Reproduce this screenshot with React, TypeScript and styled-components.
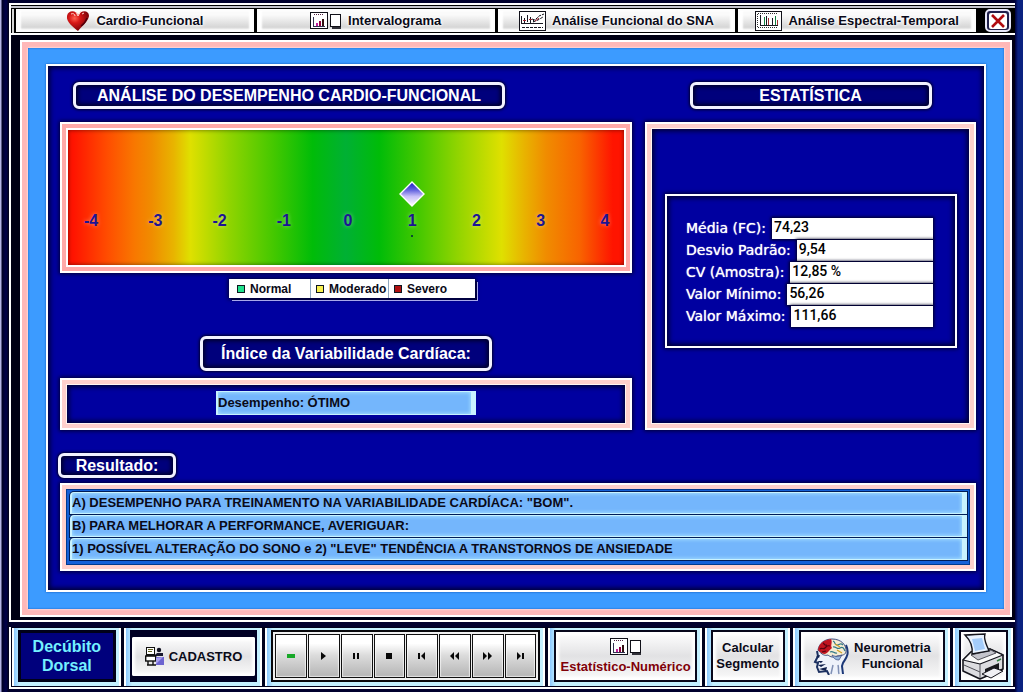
import React from "react";
import styled, { createGlobalStyle, css } from "styled-components";

const GlobalStyle = createGlobalStyle`
  *, *::before, *::after { box-sizing: border-box; }
  body {
    margin: 0;
    background: #00002e;
    font-family: "Liberation Sans", Arial, sans-serif;
    font-weight: 700;
    color: #0a0a18;
  }
  button, input, h1, h2, p { font: inherit; color: inherit; margin: 0; }
  button { cursor: pointer; }
`;

const Screen = styled.div`
  display: flex;
  flex-direction: column;
  gap: 5px;
  padding: 3px 8px 4px 9px;
  background: linear-gradient(90deg, #b4b4e6 1px, #000024 2px, #00004c 6px, #000018 9px, transparent 10px),
    linear-gradient(270deg, #0a2280 5px, #00003a 8px, transparent 9px), #00002e;
`;

/* ---- upper window: tab bar and report ---- */

const Window = styled.div`
  display: flex;
  flex-direction: column;
  border: 2px solid #fff;
  border-right: 0;
  background: #000014;
`;

const TabBar = styled.nav`
  display: flex;
  align-items: stretch;
  gap: 9px;
  height: 30px;
  padding: 4px 4px 1px 5px;
  border-bottom: 2px solid #fff;
  background: linear-gradient(#000 1px, #c4c4cc 1px, #c4c4cc 3px, #000 3px, #000 4px, transparent 4px),
    linear-gradient(90deg, #000 1px, #d8d8d8 1px, #d8d8d8 3px, #000 3px);
`;

const Tabs = styled.div`
  flex: 1;
  display: flex;
  gap: 3px;
`;

const Tab = styled.button`
  flex: 1 1 0;
  min-width: 0;
  display: flex;
  align-items: center;
  justify-content: center;
  gap: 6px;
  padding: 0;
  border: 2px solid #fdfdfd;
  background: linear-gradient(#fafafa 20%, #d6d6d6 85%, #f4f4f4);
  box-shadow: inset 3px 0 2px #fff, inset -3px 0 2px #fff;
  font-size: 13px;
  line-height: 16px;
  white-space: nowrap;
`;

const Halo = styled.span`
  text-shadow: 0 0 2px #fff, 0 0 3px #fff, 0 0 4px #fff;
`;

const CloseButton = styled.button`
  width: 26px;
  padding: 0;
  display: grid;
  place-items: center;
  border: 2px solid #e8e8fa;
  border-radius: 5px;
  background: #20204c;
`;

const Report = styled.main`
  margin: 5px 3px 3px 9px;
  border: 2px solid #fff;
  padding: 6px;
  background: #ffb8b8;
`;

const BlueFrame = styled.div`
  padding: 16px 18px 17px 18px;
  background: #3c9bff;
  box-shadow: inset 0 0 2px #1458b8, 0 0 2px #fff;
`;

const Sheet = styled.div`
  display: grid;
  grid-template-columns: 572fr 331fr;
  column-gap: 13px;
  padding: 16px 8px 19px 12px;
  border: 2px solid #fff;
  background: #0000a0;
  box-shadow: inset 0 0 5px 2px #000030, 0 0 2px #0a50b0;
`;

const Column = styled.section`
  display: flex;
  flex-direction: column;
  min-width: 0;
`;

const capsule = css`
  border: 3px solid #f2f2ff;
  border-radius: 6px;
  background: #00007c;
  box-shadow: inset 0 0 4px 2px #000028, 0 0 3px 1px #000028;
  color: #fff;
  font-size: 16px;
  text-align: center;
  white-space: nowrap;
`;

const Title = styled.h1<{ $width: number; $align?: string }>`
  ${capsule}
  align-self: ${(p) => p.$align ?? "center"};
  width: ${(p) => p.$width}px;
  max-width: 100%;
  line-height: 21px;
`;

const MainTitle = styled(Title)`
  margin-left: 13px;
`;

const IndexLabel = styled.label`
  ${capsule}
  align-self: center;
  width: 292px;
  margin-top: 38px;
  line-height: 29px;
`;

const Panel = styled.div<{ $tone?: string }>`
  border: 2px solid #fff;
  padding: 4px;
  background: ${(p) => p.$tone ?? "#ffd0cc"};
  box-shadow: 0 0 4px 1px #000030;
`;

const GaugePanel = styled(Panel)`
  margin-top: 13px;
`;

const Gauge = styled.div`
  display: flex;
  justify-content: space-between;
  align-items: flex-end;
  height: 139px;
  padding: 0 7px 22px 11px;
  border: 2px solid #fff;
  background: linear-gradient(
    90deg,
    #ff1400 1%, #ff4c00 7%, #f87800 12%, #f08c00 15%, #e8b400 19%, #dfe000 22%,
    #90d400 29%, #44c800 37%, #00bc08 44%, #00b034 50%, #00bc08 56%, #44c800 63%,
    #90d400 70%, #dfe000 78%, #e8b400 82%, #f08c00 86%, #f86400 92%, #ff1400 98%
  );
  box-shadow: inset 0 0 4px #00000088;
`;

const Mark = styled.div`
  width: 24px;
  height: 62px;
  display: flex;
  flex-direction: column;
  align-items: center;
  color: #1c1494;
  font-size: 16px;
  line-height: 18px;
  text-shadow: 0 0 4px #ffffff70;
`;

const Pointer = styled.div`
  height: 31px;
`;

const Dot = styled.i`
  width: 2px;
  height: 2px;
  margin-top: 5px;
  background: #0c4c30;
`;

const Legend = styled.ul`
  align-self: center;
  display: flex;
  width: 246px;
  height: 19px;
  margin: 6px 0 0 12px;
  padding: 0 8px;
  list-style: none;
  background: #fff;
  box-shadow: 2px 2px 0 #000040, 3px 3px 0 #a8a8ec, 0 0 4px 1px #000030;
  font-size: 12px;
  line-height: 18px;
`;

const LegendItem = styled.li`
  display: flex;
  align-items: center;
  gap: 5px;
  & + & { border-left: 1px solid #90a8c0; padding-left: 5px; }
  &:first-child { flex: 0 0 73px; }
  &:nth-child(2) { flex: 0 0 78px; }
`;

const Swatch = styled.i<{ $color: string }>`
  width: 8px;
  height: 8px;
  border: 1px solid #101820;
  background: ${(p) => p.$color};
`;

const field = css`
  display: block;
  border: 1px solid #c8f2ff;
  border-width: 1px 5px 1px 2px;
  background: #74b6fc;
  box-shadow: inset 0 0 4px #b4ecff;
  padding: 0 0 2px;
  font-size: 13px;
  outline: 0;
`;

const IndexPanel = styled(Panel)`
  margin-top: 7px;
`;

const Well = styled.div<{ $pad: string }>`
  border: 1px solid #fff4f2;
  background: #0000a0;
  box-shadow: inset 0 0 5px 2px #000030;
  padding: ${(p) => p.$pad};
`;

const IndexField = styled.input`
  ${field}
  width: 260px;
  height: 24px;
  margin: 0 auto;
`;

const StatsPanel = styled(Panel)`
  flex: 1;
  display: flex;
  margin-top: 13px;
`;

const StatsWell = styled(Well)`
  flex: 1;
  min-width: 0;
  display: flex;
  flex-direction: column;
  justify-content: center;
`;

const StatsBox = styled.div`
  display: flex;
  flex-direction: column;
  gap: 1px;
  margin-bottom: 10px;
  padding: 22px 22px 19px 19px;
  border: 2px solid #fff;
  box-shadow: inset 0 0 5px 2px #000030, 0 0 4px 1px #000030;
`;

const StatRow = styled.div`
  display: flex;
  align-items: center;
  gap: 6px;
  color: #fff;
  font: 400 14px/21px "DejaVu Sans", Verdana, sans-serif;
  text-shadow: 0 0 1px #fff;
`;

const StatInput = styled.input`
  flex: 1;
  min-width: 0;
  height: 21px;
  padding: 0 0 3px 2px;
  border: 0;
  background: #fff;
  box-shadow: 0 0 3px 1px #000020;
  color: #000;
  font: 500 14px/18px Roboto, "Liberation Sans", sans-serif;
`;

const Results = styled.section`
  grid-column: 1 / -1;
  display: flex;
  flex-direction: column;
  padding-top: 23px;
`;

const ResultTitle = styled(Title)`
  margin-left: -2px;
  line-height: 19px;
`;

const ResultPanel = styled(Panel)`
  margin-top: 5px;
`;

const ResultList = styled.div`
  display: flex;
  flex-direction: column;
  gap: 1px;
  padding: 2px 2px 4px 3px;
  border: 1px solid #003a90;
  background: #1460d8;
`;

const ResultLine = styled.input`
  ${field}
  width: 100%;
  height: 22px;
  border-radius: 4px 0 0 0;
  box-shadow: inset 0 0 4px #b4ecff, 0 0 0 1px #001c58;
`;

/* ---- lower command bar ---- */

const CommandBar = styled.footer`
  display: flex;
  gap: 3px;
  height: 62px;
  padding: 1px 2px 1px 1px;
  border-left: 2px solid #fff;
  border-bottom: 2px solid #fff;
  background: #00001c;
`;

const Cell = styled.div<{ $basis: number }>`
  flex: 1 1 ${(p) => p.$basis}px;
  min-width: 0;
  display: flex;
  padding: 2px 3px 4px 4px;
  border: 1px solid #fff;
  border-width: 0 2px;
  background: linear-gradient(90deg, #8cc8ff, #c4f0ff 6px, #c4f0ff);
`;

const Status = styled.p`
  flex: 1;
  display: flex;
  align-items: center;
  justify-content: center;
  border: 3px solid #000018;
  background: #00007c;
  color: #74f0ff;
  font-size: 16px;
  line-height: 19px;
  text-align: center;
`;

const DarkSlot = styled.div`
  flex: 1;
  display: flex;
  padding: 7px 2px 6px;
  background: #000024;
`;

const Command = styled.button<{ $stack?: boolean; $color?: string }>`
  flex: 1;
  min-width: 0;
  display: flex;
  flex-direction: ${(p) => (p.$stack ? "column" : "row")};
  align-items: center;
  justify-content: center;
  gap: ${(p) => (p.$stack ? 3 : 5)}px;
  padding: 0;
  border: 2px solid #08081c;
  background: linear-gradient(#fff, #e2e2e4 50%, #fafafa);
  box-shadow: inset 0 0 3px 3px #fff;
  color: ${(p) => p.$color ?? "#0a0a18"};
  font-size: 13px;
  line-height: 16px;
  white-space: nowrap;
`;

const RaisedCommand = styled(Command)`
  border: 0;
  border-radius: 2px;
`;

const Transport = styled.div`
  flex: 1;
  display: grid;
  grid-template-columns: repeat(8, 1fr);
  gap: 1px;
  padding: 2px;
  border: 2px solid #08080c;
  background: #f0f0f0;
`;

const TransportButton = styled.button`
  display: grid;
  place-items: center;
  padding: 0;
  min-width: 0;
  border: 1px solid #101010;
  background: linear-gradient(#fff 20%, #dcdcdc 48%, #b4b4b4);
  box-shadow: inset 0 0 1px 1px #ffffffa0;
`;

/* ---- drawings ---- */

const Heart = () => (
  <svg width="24" height="22" viewBox="0 0 24 22" aria-hidden="true">
    <defs>
      <radialGradient id="heart" cx="0.35" cy="0.35" r="0.7">
        <stop offset="0" stopColor="#ff6050" />
        <stop offset="0.35" stopColor="#d81818" />
        <stop offset="1" stopColor="#700008" />
      </radialGradient>
    </defs>
    <path d="M12 5C10 0 2 0 1 6c-1 6 6 11 11 15 3-4 10-9 11-15 0-6-8-6-11-1z" fill="url(#heart)" />
    <path d="M10 2l2 4 3-5M5 4c2-1 4 0 4 2M16 4l2-1" fill="none" stroke="#ffd8d0" strokeWidth="1" />
    <path d="M15 16c3-2 5-5 6-8" fill="none" stroke="#50000c" strokeWidth="1.4" />
  </svg>
);

const ChartAndSheet = () => (
  <svg width="32" height="18" viewBox="0 0 32 18" shapeRendering="crispEdges" aria-hidden="true">
    <rect x="0.5" y="0.5" width="17" height="16" fill="#fff" stroke="#101018" />
    <path d="M4 2.5h10" stroke="#502040" strokeDasharray="1 1" />
    <path d="M3.5 5v9M3 14.5h12" stroke="#303050" />
    <path d="M6 11h2v3H6z" fill="#c020a0" />
    <path d="M9 9h2v5H9z" fill="#900040" />
    <path d="M12 7h2v7h-2z" fill="#301010" />
    <path d="M22 15h9v2h-9z" fill="#303038" />
    <rect x="20.5" y="2.5" width="10" height="12" fill="#fff" stroke="#101018" />
  </svg>
);

const TrendIcon = () => (
  <svg width="27" height="20" viewBox="0 0 27 20" aria-hidden="true">
    <rect x="0.5" y="0.5" width="26" height="19" fill="#fff" stroke="#101018" />
    <g fill="none" stroke="#181820" strokeWidth="1">
      <path d="M2.5 12V5M5.5 12V7M8.5 11V4M11.5 12V6M14.5 11V8M2 12.5h22" />
      <path d="M13 8l3 1 4-4 5-2M14 11l5-2 5-3M3 16.5h21" strokeDasharray="3 1" />
    </g>
    <path d="M4 9.5h3M10 8.5h3M16 10l4-3" stroke="#a02030" fill="none" />
  </svg>
);

const SpectrumIcon = () => (
  <svg width="27" height="20" viewBox="0 0 27 20" shapeRendering="crispEdges" aria-hidden="true">
    <rect x="0.5" y="0.5" width="26" height="19" fill="#fff" stroke="#101018" />
    <path d="M3 2.5h19M2.5 3v13M3 16.5h20" stroke="#303030" strokeDasharray="1 1" />
    <path d="M5.5 14V4M5 14.5h18M11.5 14V5M17.5 14V7" stroke="#181820" />
    <path d="M9.5 14V6M20.5 14V5" stroke="#108040" />
    <path d="M13.5 14V7M22.5 14V9" stroke="#a03030" />
  </svg>
);

const Cross = () => (
  <svg width="18" height="16" viewBox="0 0 18 16" aria-hidden="true">
    <rect width="18" height="16" rx="2" fill="#fff" />
    <path d="M3 2l12 12M15 2L3 14" stroke="#b00c10" strokeWidth="2.6" />
  </svg>
);

const Diamond = () => (
  <svg width="26" height="26" viewBox="0 0 26 26" aria-hidden="true">
    <defs>
      <linearGradient id="diamond" x1="0" y1="0" x2="0" y2="1">
        <stop offset="0" stopColor="#1818c0" />
        <stop offset="0.35" stopColor="#6868e0" />
        <stop offset="0.6" stopColor="#c8c0f8" />
        <stop offset="1" stopColor="#fff" />
      </linearGradient>
    </defs>
    <path d="M13 1l12 12-12 12L1 13z" fill="url(#diamond)" stroke="#fff" strokeWidth="1.4" />
  </svg>
);

const DeskIcon = () => (
  <svg width="19" height="19" viewBox="0 0 19 19" aria-hidden="true">
    <rect x="1.5" y="0.5" width="8" height="7" fill="#fff" stroke="#101010" />
    <path d="M3 2.5h5M3 4.5h4" stroke="#606020" />
    <circle cx="14" cy="3" r="2.2" fill="#101020" />
    <path d="M10 8l2-2h6v3h-8z" fill="#181830" />
    <rect x="0.7" y="9" width="10" height="5" fill="#fff" stroke="#101010" strokeWidth="1.4" />
    <path d="M1 8.500h10M3 14v4M8 14v4M2 18h9" stroke="#101010" strokeWidth="1.4" />
    <rect x="11" y="10" width="8" height="8" fill="#6c64d0" />
    <path d="M11 11l7-1-7 7z" fill="#a8a0f0" />
  </svg>
);

const BrainHead = () => (
  <svg width="36" height="38" viewBox="0 0 36 38" aria-hidden="true">
    <path d="M5 12C7 4 14 1 21 1c9 0 14 7 14 14 0 7-5 9-6 14l1 8H15l-2-5-7 1-2-6 1-2-4-2 3-6z" fill="#eef2fa" />
    <path d="M33 8c4 9 0 13-3 18l-1 3 1 8" fill="none" stroke="#1c3878" strokeWidth="2" />
    <path d="M4 14l1 5-3 6 3 1-1 4 2 5 8-1 2 4" fill="none" stroke="#1c3060" strokeWidth="2" />
    <path d="M4 24l6 0-2 2zM5 28l8-1-5 3zM3 19l4-1-1 3zM6 32l8-2-1 4z" fill="#10204c" />
    <path d="M25 28c1 4 0 6 1 9M20 28l-2 9" stroke="#8090b4" strokeWidth="1.5" fill="none" />
    <path d="M5 13C6 6 12 2 19 2c9 0 15 6 14 13-1 4-6 3-9 4-3 2-7 1-9-1-3 1-6 0-10-5z" fill="#f4ecd4" stroke="#405080" />
    <path d="M5 13C6 6 11 3 18 2c2 4-1 6 1 9-3 2-4 5-7 6-3 0-5-2-7-4z" fill="#c01420" />
    <path d="M7 12c2-2 3 1 5-1s2-3 5-2M10 6c2 1 1 3 4 2M9 15l4-1" fill="none" stroke="#580410" strokeWidth="1.2" />
    <path d="M20 4c3 1 1 4 4 4s3-3 6 0M20 10c3-1 4 3 7 1s4 1 5 3M17 15c3-2 4 2 7 1" fill="none" stroke="#307888" strokeWidth="1.2" />
    <path d="M22 7l5 3M24 13l5 3" stroke="#d0a020" strokeWidth="1.2" />
    <path d="M19 18c4 2 7 2 10 0l-3 5c-3 0-5-1-7-5z" fill="#98b8dc" stroke="#384880" strokeWidth="0.7" />
  </svg>
);

const Printer = () => (
  <svg width="43" height="47" viewBox="0 0 43 47" aria-hidden="true">
    <path d="M1 27l8-8 19-3 13 6v14L18 46 1 38z" fill="#dcdce0" stroke="#14141c" strokeWidth="1.6" strokeLinejoin="round" />
    <path d="M1 27l8-8 19-3 13 6-23 9z" fill="#fafafa" stroke="#14141c" strokeWidth="1.2" strokeLinejoin="round" />
    <path d="M9 22l20-5 5 3-18 7z" fill="#c4c4cc" stroke="#303038" strokeWidth="0.8" />
    <path d="M3 2c7 0 13-1 20-1-2 6 2 11 4 17l-17 3C11 14 8 7 3 2z" fill="#e8f2ff" stroke="#14141c" strokeWidth="1.4" />
    <path d="M10 6l10-1 3 11-10 2z" fill="#a4ccfa" />
    <path d="M18 31v14M2 32l16 7" stroke="#505058" fill="none" />
    <path d="M23 36l14-6v6l-14 6z" fill="#18181c" />
    <path d="M20 41l12-6 9 3-12 7z" fill="#f0f0f4" stroke="#14141c" />
    <path d="M35 28l4-2" stroke="#308040" strokeWidth="1.5" />
  </svg>
);

const transportShapes: [string, string][] = [
  ["Ativo", "M0 4h8v4H0z"],
  ["Reproduzir", "M2 2l5 4-5 4z"],
  ["Pausar", "M1 3h2v6H1zM5 3h2v6H5z"],
  ["Parar", "M1 3h6v6H1z"],
  ["Início", "M0 3h2v6H0zM7 2v8L3 6z"],
  ["Retroceder", "M4 2v8L0 6zM9 2v8L5 6z"],
  ["Avançar", "M0 2v8l4-4zM5 2v8l4-4z"],
  ["Fim", "M1 2v8l4-4zM6 3h2v6H6z"],
];

const stats: [string, string, string][] = [
  ["media", "Média (FC):", "74,23"],
  ["desvio", "Desvio Padrão:", "9,54"],
  ["cv", "CV (Amostra):", "12,85 %"],
  ["minimo", "Valor Mínimo:", "56,26"],
  ["maximo", "Valor Máximo:", "111,66"],
];

const results = [
  'A) DESEMPENHO PARA TREINAMENTO NA VARIABILIDADE CARDÍACA: "BOM".',
  "B) PARA MELHORAR A PERFORMANCE, AVERIGUAR:",
  '1) POSSÍVEL ALTERAÇÃO DO SONO e 2) "LEVE" TENDÊNCIA A TRANSTORNOS DE ANSIEDADE',
];

const marks = [-4, -3, -2, -1, 0, 1, 2, 3, 4];
const currentMark = 1;

export default function App() {
  return (
    <>
      <GlobalStyle />
      <Screen>
        <Window>
          <TabBar>
            <Tabs>
              <Tab><Heart /><Halo>Cardio-Funcional</Halo></Tab>
              <Tab><ChartAndSheet /><Halo>Intervalograma</Halo></Tab>
              <Tab><TrendIcon /><Halo>Análise Funcional do SNA</Halo></Tab>
              <Tab><SpectrumIcon /><Halo>Análise Espectral-Temporal</Halo></Tab>
            </Tabs>
            <CloseButton aria-label="Fechar"><Cross /></CloseButton>
          </TabBar>

          <Report>
            <BlueFrame>
              <Sheet>
                <Column>
                  <MainTitle $width={432} $align="flex-start">ANÁLISE DO DESEMPENHO CARDIO-FUNCIONAL</MainTitle>
                  <GaugePanel $tone="#ffaaa8">
                    <Gauge>
                      {marks.map((value) => (
                        <Mark key={value}>
                          <Pointer>{value === currentMark && <Diamond />}</Pointer>
                          <span>{value}</span>
                          {value === currentMark && <Dot />}
                        </Mark>
                      ))}
                    </Gauge>
                  </GaugePanel>
                  <Legend>
                    <LegendItem><Swatch $color="#20e08c" />Normal</LegendItem>
                    <LegendItem><Swatch $color="#f8f050" />Moderado</LegendItem>
                    <LegendItem><Swatch $color="#b01010" />Severo</LegendItem>
                  </Legend>
                  <IndexLabel htmlFor="indice">Índice da Variabilidade Cardíaca:</IndexLabel>
                  <IndexPanel>
                    <Well $pad="6px 0 8px">
                      <IndexField id="indice" readOnly value="Desempenho: ÓTIMO" />
                    </Well>
                  </IndexPanel>
                </Column>

                <Column>
                  <Title as="h2" $width={242}>ESTATÍSTICA</Title>
                  <StatsPanel>
                    <StatsWell $pad="0 12px 0 13px">
                      <StatsBox>
                        {stats.map(([id, label, value]) => (
                          <StatRow key={id}>
                            <label htmlFor={id}>{label}</label>
                            <StatInput id={id} readOnly value={value} />
                          </StatRow>
                        ))}
                      </StatsBox>
                    </StatsWell>
                  </StatsPanel>
                </Column>

                <Results>
                  <ResultTitle as="h2" id="resultado" $width={118} $align="flex-start">Resultado:</ResultTitle>
                  <ResultPanel>
                    <ResultList>
                      {results.map((line) => (
                        <ResultLine key={line} aria-labelledby="resultado" readOnly value={line} />
                      ))}
                    </ResultList>
                  </ResultPanel>
                </Results>
              </Sheet>
            </BlueFrame>
          </Report>
        </Window>

        <CommandBar>
          <Cell $basis={109}>
            <Status>Decúbito<br />Dorsal</Status>
          </Cell>
          <Cell $basis={139}>
            <DarkSlot>
              <RaisedCommand><DeskIcon />CADASTRO</RaisedCommand>
            </DarkSlot>
          </Cell>
          <Cell $basis={281}>
            <Transport>
              {transportShapes.map(([name, d], i) => (
                <TransportButton key={name} aria-label={name}>
                  <svg width="9" height="12" viewBox="0 0 9 12" aria-hidden="true">
                    <path d={d} fill={i === 0 ? "#18a828" : "#080808"} />
                  </svg>
                </TransportButton>
              ))}
            </Transport>
          </Cell>
          <Cell $basis={154}>
            <Command $stack $color="#800008"><ChartAndSheet />Estatístico-Numérico</Command>
          </Cell>
          <Cell $basis={85}>
            <Command><span>Calcular<br />Segmento</span></Command>
          </Cell>
          <Cell $basis={158}>
            <Command><BrainHead /><span>Neurometria<br />Funcional</span></Command>
          </Cell>
          <Cell $basis={60}>
            <Command aria-label="Imprimir"><Printer /></Command>
          </Cell>
        </CommandBar>
      </Screen>
    </>
  );
}
